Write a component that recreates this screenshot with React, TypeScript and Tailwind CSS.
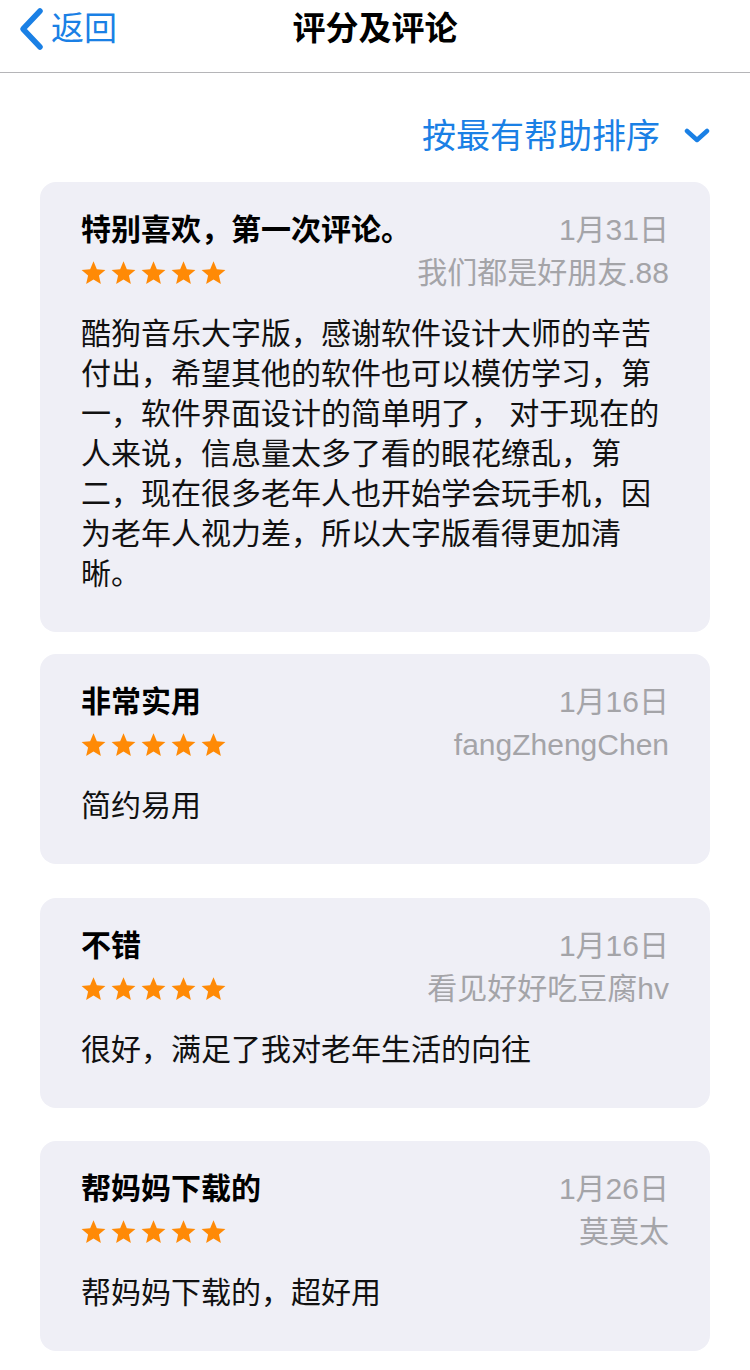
import React from 'react';

interface Review {
  id: number;
  title: string;
  date: string;
  author: string;
  body: string;
  gap: string;
}

const reviews: Review[] = [
  {
    id: 1,
    title: '特别喜欢，第一次评论。',
    date: '1月31日',
    author: '我们都是好朋友.88',
    body: '酷狗音乐大字版，感谢软件设计大师的辛苦付出，希望其他的软件也可以模仿学习，第一，软件界面设计的简单明了， 对于现在的人来说，信息量太多了看的眼花缭乱，第二，现在很多老年人也开始学会玩手机，因为老年人视力差，所以大字版看得更加清晰。',
    gap: 'mt-0',
  },
  {
    id: 2,
    title: '非常实用',
    date: '1月16日',
    author: 'fangZhengChen',
    body: '简约易用',
    gap: 'mt-[22px]',
  },
  {
    id: 3,
    title: '不错',
    date: '1月16日',
    author: '看见好好吃豆腐hv',
    body: '很好，满足了我对老年生活的向往',
    gap: 'mt-[34px]',
  },
  {
    id: 4,
    title: '帮妈妈下载的',
    date: '1月26日',
    author: '莫莫太',
    body: '帮妈妈下载的，超好用',
    gap: 'mt-[33px]',
  },
];

const Star = () => (
  <svg width="27" height="26" viewBox="0 0 24 24" className="block">
    <path
      d="M12 1.2l3.1 7.3 7.9.7-6 5.2 1.8 7.7L12 18l-6.8 4.1L7 14.4 1 9.2l7.9-.7z"
      fill="#ff8a06"
    />
  </svg>
);

const Stars = () => (
  <div className="flex gap-[3px] -ml-[1px]">
    {[0, 1, 2, 3, 4].map((i) => (
      <Star key={i} />
    ))}
  </div>
);

const ReviewCard: React.FC<{ review: Review }> = ({ review }) => (
  <div className={`${review.gap} bg-[#efeff6] rounded-[16px] pt-[28px] pb-[38px] px-[41px]`}>
    <div className="flex justify-between items-center h-[40px]">
      <h2 className="text-[30px] leading-[40px] font-semibold text-black">{review.title}</h2>
      <span className="text-[30px] leading-[40px] text-[#a4a4a8]">{review.date}</span>
    </div>
    <div className="flex justify-between items-center h-[46px]">
      <Stars />
      <span className="text-[30px] leading-[46px] text-[#a4a4a8]">{review.author}</span>
    </div>
    <p className="mt-[18px] text-[30px] leading-[40px] text-[#111]">{review.body}</p>
  </div>
);

export default function App() {
  return (
    <div
      className="min-h-screen bg-white w-[750px]"
      style={{ fontFamily: '"Liberation Sans", "Noto Sans CJK SC", sans-serif' }}
    >
      <header className="h-[73px] border-b border-[#b5b5b8] relative flex items-start">
        <button className="flex items-center h-[58px] pl-[16px] text-[#1a80e5]">
          <svg width="30" height="44" viewBox="0 0 30 44" className="block">
            <path
              d="M24 4 L7 22 L24 40"
              fill="none"
              stroke="#1a80e5"
              strokeWidth="5.5"
              strokeLinecap="round"
              strokeLinejoin="round"
            />
          </svg>
          <span className="ml-[5px] text-[33px] leading-[58px]">返回</span>
        </button>
        <h1 className="absolute left-0 right-0 top-0 text-center text-[33px] leading-[58px] font-semibold text-black pointer-events-none">
          评分及评论
        </h1>
      </header>

      <main className="px-[40px]">
        <div className="flex justify-end items-center pt-[41px] mb-[24px]">
          <span className="text-[34px] leading-[44px] text-[#1a80e5]">按最有帮助排序</span>
          <svg width="26" height="18" viewBox="0 0 26 18" className="ml-[24px] block">
            <path
              d="M3 4 L13 13 L23 4"
              fill="none"
              stroke="#1a80e5"
              strokeWidth="4.5"
              strokeLinecap="round"
              strokeLinejoin="round"
            />
          </svg>
        </div>

        <div className="flex flex-col">
          {reviews.map((review) => (
            <ReviewCard key={review.id} review={review} />
          ))}
        </div>
      </main>
    </div>
  );
}
